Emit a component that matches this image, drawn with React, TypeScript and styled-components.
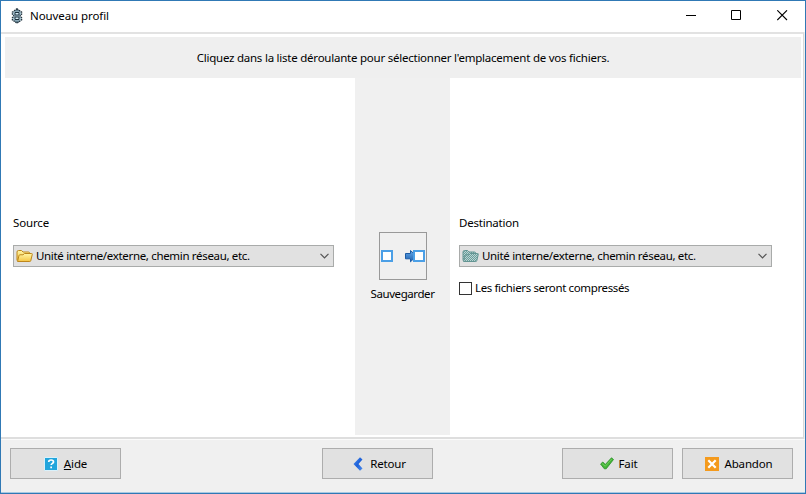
import React from "react";
import styled, { createGlobalStyle } from "styled-components";

const Global = createGlobalStyle`
  *, *::before, *::after { box-sizing: border-box; }
  body { margin: 0; overflow: hidden; }
  button { font: inherit; color: inherit; }
  svg { display: block; flex: none; }
`;

const Window = styled.div`
  width: 806px;
  height: 494px;
  display: flex;
  flex-direction: column;
  border: 1px solid #3079b5;
  background: #f0f0f0;
  color: #000;
  font: 11.5px/16px "Noto Sans", "Open Sans", sans-serif;
`;

const TitleBar = styled.header`
  height: 31px;
  flex: none;
  display: flex;
  align-items: center;
  padding: 0 0 2px 8px;
  background: #fff;
`;

const Label = styled.span<{ $spacing?: number }>`
  white-space: nowrap;
  letter-spacing: ${(p) => p.$spacing ?? -0.15}px;
`;

const Title = styled(Label)`
  flex: 1;
  margin-left: 5px;
`;

const Caption = styled.button`
  width: 46px;
  height: 28px;
  padding: 0;
  border: 0;
  background: none;
  display: flex;
  align-items: center;
  justify-content: center;
`;

const Content = styled.main`
  height: 407px;
  flex: none;
  display: flex;
  flex-direction: column;
  padding: 3px 2px 2px 4px;
  margin-right: 1px;
  border: 1px solid #d9d9d9;
  border-top: 2px solid #e2e2e2;
  border-left: 0;
  border-bottom: 2px solid #dedede;
  background: #fff;
`;

const Instruction = styled.div`
  height: 41px;
  flex: none;
  display: flex;
  align-items: center;
  justify-content: center;
  padding-top: 1px;
  background: #efefef;
`;

const Columns = styled.div`
  flex: 1;
  display: grid;
  grid-template-columns: 350px 95px 1fr;
`;

const Panel = styled.section<{ $end: number; $start: number }>`
  display: flex;
  flex-direction: column;
  padding: 137px ${(p) => p.$end}px 0 ${(p) => p.$start}px;
`;

const Select = styled.button`
  height: 22px;
  margin-top: 14px;
  padding: 0 4px 0 2px;
  display: flex;
  align-items: center;
  border: 1px solid #a9abaa;
  background: #e1e1e1;
`;

const SelectText = styled(Label)`
  flex: 1;
  text-align: left;
  margin-left: 3px;
`;

const Check = styled.label`
  display: flex;
  align-items: center;
  gap: 3px;
  margin-top: 13px;
`;

const Box = styled.span`
  width: 13px;
  height: 13px;
  border: 1px solid #333;
  background: #fff;
`;

const Middle = styled.section`
  display: flex;
  flex-direction: column;
  align-items: center;
  padding-top: 154px;
  background: #f0f0f0;
`;

const ModeButton = styled.button`
  width: 48px;
  height: 48px;
  margin-bottom: 6px;
  padding: 0;
  display: flex;
  align-items: center;
  justify-content: center;
  border: 1px solid #999;
  background: #f0f0f0;
`;

const Footer = styled.footer`
  flex: 1;
  display: flex;
  align-items: flex-start;
  padding: 8px 11px 0 9px;
  border-top: 1px solid #fbfbfb;
  border-bottom: 1px solid #a9c9e2;
`;

const Action = styled.button<{ $gap: number; $before?: number; $shift?: number }>`
  width: 111px;
  height: 31px;
  flex: none;
  margin-left: ${(p) => p.$before ?? 0}px;
  padding: 0 0 0 ${(p) => p.$shift ?? 0}px;
  display: flex;
  align-items: center;
  justify-content: center;
  gap: ${(p) => p.$gap}px;
  border: 1px solid #adadad;
  background: #e1e1e1;
`;

const AppIcon = () => (
  <svg width="16" height="16" viewBox="0 0 16 16">
    <path d="M8 .8 12.600 4.200v2L11 8l1.600 1.800v2L8 15.200 3.400 11.800v-2L5 8 3.400 6.200v-2Z" fill="#a9c6d4" stroke="#22323d" strokeWidth="1.300" strokeDasharray="1.600 .7" />
    <path d="M6 4.500h4v2.500H6zM6 9h4v2.500H6z" fill="#d5ecf5" stroke="#1b2f3c" />
    <path d="M6 2.800h4M6 13.200h4" stroke="#466474" />
  </svg>
);

const Folder = ({ teal }: { teal?: boolean }) => (
  <svg width="17" height="14" viewBox="0 0 17 14">
    <defs>
      <linearGradient id="gold" x2="0" y2="1">
        <stop stopColor="#fff6a6" />
        <stop offset="1" stopColor="#f5c544" />
      </linearGradient>
      <pattern id="weave" width="2" height="2" patternUnits="userSpaceOnUse">
        <path d="M0 0h2v2H0z" fill="#bcd3d1" />
        <path d="M0 0h1v1H0zM1 1h1v1H1z" fill="#689f9d" />
      </pattern>
    </defs>
    <g fill={teal ? "url(#weave)" : "url(#gold)"} stroke={teal ? "#639492" : "#bd861b"} strokeLinejoin="round">
      <path d="M1 11.500V3q0-1.500 1.500-1.500h3L7 3h5.500q1 0 1 1v1.500" />
      <path d="M1.500 12.500 3 6.500q.2-.7 1-.7h3L8.500 4.500h7q1 0 .8.800l-1.500 6.400q-.2.800-1 .8Z" />
    </g>
  </svg>
);

const Chevron = () => (
  <svg width="9" height="6" viewBox="0 0 9 6">
    <path d="m.5.800 4 4 4-4" fill="none" stroke="#555" strokeWidth="1.200" />
  </svg>
);

const TransferIcon = () => (
  <svg width="46" height="46" viewBox="0 0 46 46">
    <defs>
      <linearGradient id="arrow" x2="0" y2="1">
        <stop stopColor="#65a8e7" />
        <stop offset="1" stopColor="#1d5fb0" />
      </linearGradient>
    </defs>
    <path d="M25.500 20.500h5v-3l6 5.500-6 5.800v-3h-5z" fill="url(#arrow)" stroke="#1d5ca5" />
    <g fill="#fff" stroke="#4b9fe6" strokeWidth="2">
      <path d="M2 18h10v10H2zM34 18h10v10H34z" />
    </g>
  </svg>
);

const HelpIcon = () => (
  <svg width="14" height="14" viewBox="0 0 14 14">
    <path d="M.5.500h13v13H.5z" fill="#22a5dc" stroke="#d9f1fb" />
    <path d="M4.700 5q0-2 2.400-2t2.400 1.900c0 1.500-2.300 1.500-2.300 3.200" fill="none" stroke="#fff" strokeWidth="1.700" />
    <path d="M6.300 9.500H8v1.700H6.300z" fill="#fff" />
  </svg>
);

const BackIcon = () => (
  <svg width="10" height="14" viewBox="0 0 10 14">
    <defs>
      <linearGradient id="back" x2="1" y2="1">
        <stop stopColor="#4d91f1" />
        <stop offset=".5" stopColor="#1d60d8" />
        <stop offset="1" stopColor="#4b8ded" />
      </linearGradient>
    </defs>
    <path d="M7 .3 9.500 2.500 5.500 7l4 4.500-2.500 2.200L.5 7Z" fill="url(#back)" />
  </svg>
);

const DoneIcon = () => (
  <svg width="14" height="13" viewBox="0 0 14 13">
    <path d="m.6 7 2.200-2L5.300 7.500 11.500.8l2 1.700L6.200 11.800H4.300Z" fill="#43b638" stroke="#278e26" strokeWidth=".8" strokeLinejoin="round" />
    <path d="m2 6.500 3.300 2.700 6.500-7.300" fill="none" stroke="#80d568" strokeWidth=".7" />
  </svg>
);

const CancelIcon = () => (
  <svg width="14" height="14" viewBox="0 0 14 14">
    <path d="M0 0h14v14H0z" fill="#f49a1d" />
    <path d="m3.300 3.300 7.400 7.400m0-7.400-7.400 7.400" stroke="#fff" strokeWidth="2.200" />
  </svg>
);

const location = "Unité interne/externe, chemin réseau, etc.";

export default function App() {
  return (
    <>
      <Global />
      <Window>
        <TitleBar>
          <AppIcon />
          <Title $spacing={-0.08}>Nouveau profil</Title>
          <Caption aria-label="Réduire">
            <svg width="11" height="11"><path d="M1 5.500h10" stroke="#000" /></svg>
          </Caption>
          <Caption aria-label="Agrandir">
            <svg width="11" height="11"><path d="M.5.500h9v9h-9z" fill="none" stroke="#000" /></svg>
          </Caption>
          <Caption aria-label="Fermer">
            <svg width="11" height="11"><path d="m.3.300 9.700 9.700m0-9.700L.3 10" stroke="#000" strokeWidth="1.100" /></svg>
          </Caption>
        </TitleBar>
        <Content>
          <Instruction>
            <Label $spacing={-0.235}>Cliquez dans la liste déroulante pour sélectionner l'emplacement de vos fichiers.</Label>
          </Instruction>
          <Columns>
            <Panel $start={8} $end={21}>
              <Label>Source</Label>
              <Select>
                <Folder />
                <SelectText $spacing={-0.33}>{location}</SelectText>
                <Chevron />
              </Select>
            </Panel>
            <Middle>
              <ModeButton aria-label="Sauvegarder"><TransferIcon /></ModeButton>
              <Label $spacing={-0.42}>Sauvegarder</Label>
            </Middle>
            <Panel $start={9} $end={29}>
              <Label $spacing={-0.22}>Destination</Label>
              <Select>
                <Folder teal />
                <SelectText $spacing={-0.33}>{location}</SelectText>
                <Chevron />
              </Select>
              <Check>
                <Box />
                <Label $spacing={-0.37}>Les fichiers seront compressés</Label>
              </Check>
            </Panel>
          </Columns>
        </Content>
        <Footer>
          <Action $gap={6}><HelpIcon /><Label><u>A</u>ide</Label></Action>
          <Action $gap={7} $before={201} $shift={4}><BackIcon /><Label>Retour</Label></Action>
          <Action $gap={5} $before={129} $shift={2}><DoneIcon /><Label>Fait</Label></Action>
          <Action $gap={5} $before={9} $shift={3}><CancelIcon /><Label>Abandon</Label></Action>
        </Footer>
      </Window>
    </>
  );
}
